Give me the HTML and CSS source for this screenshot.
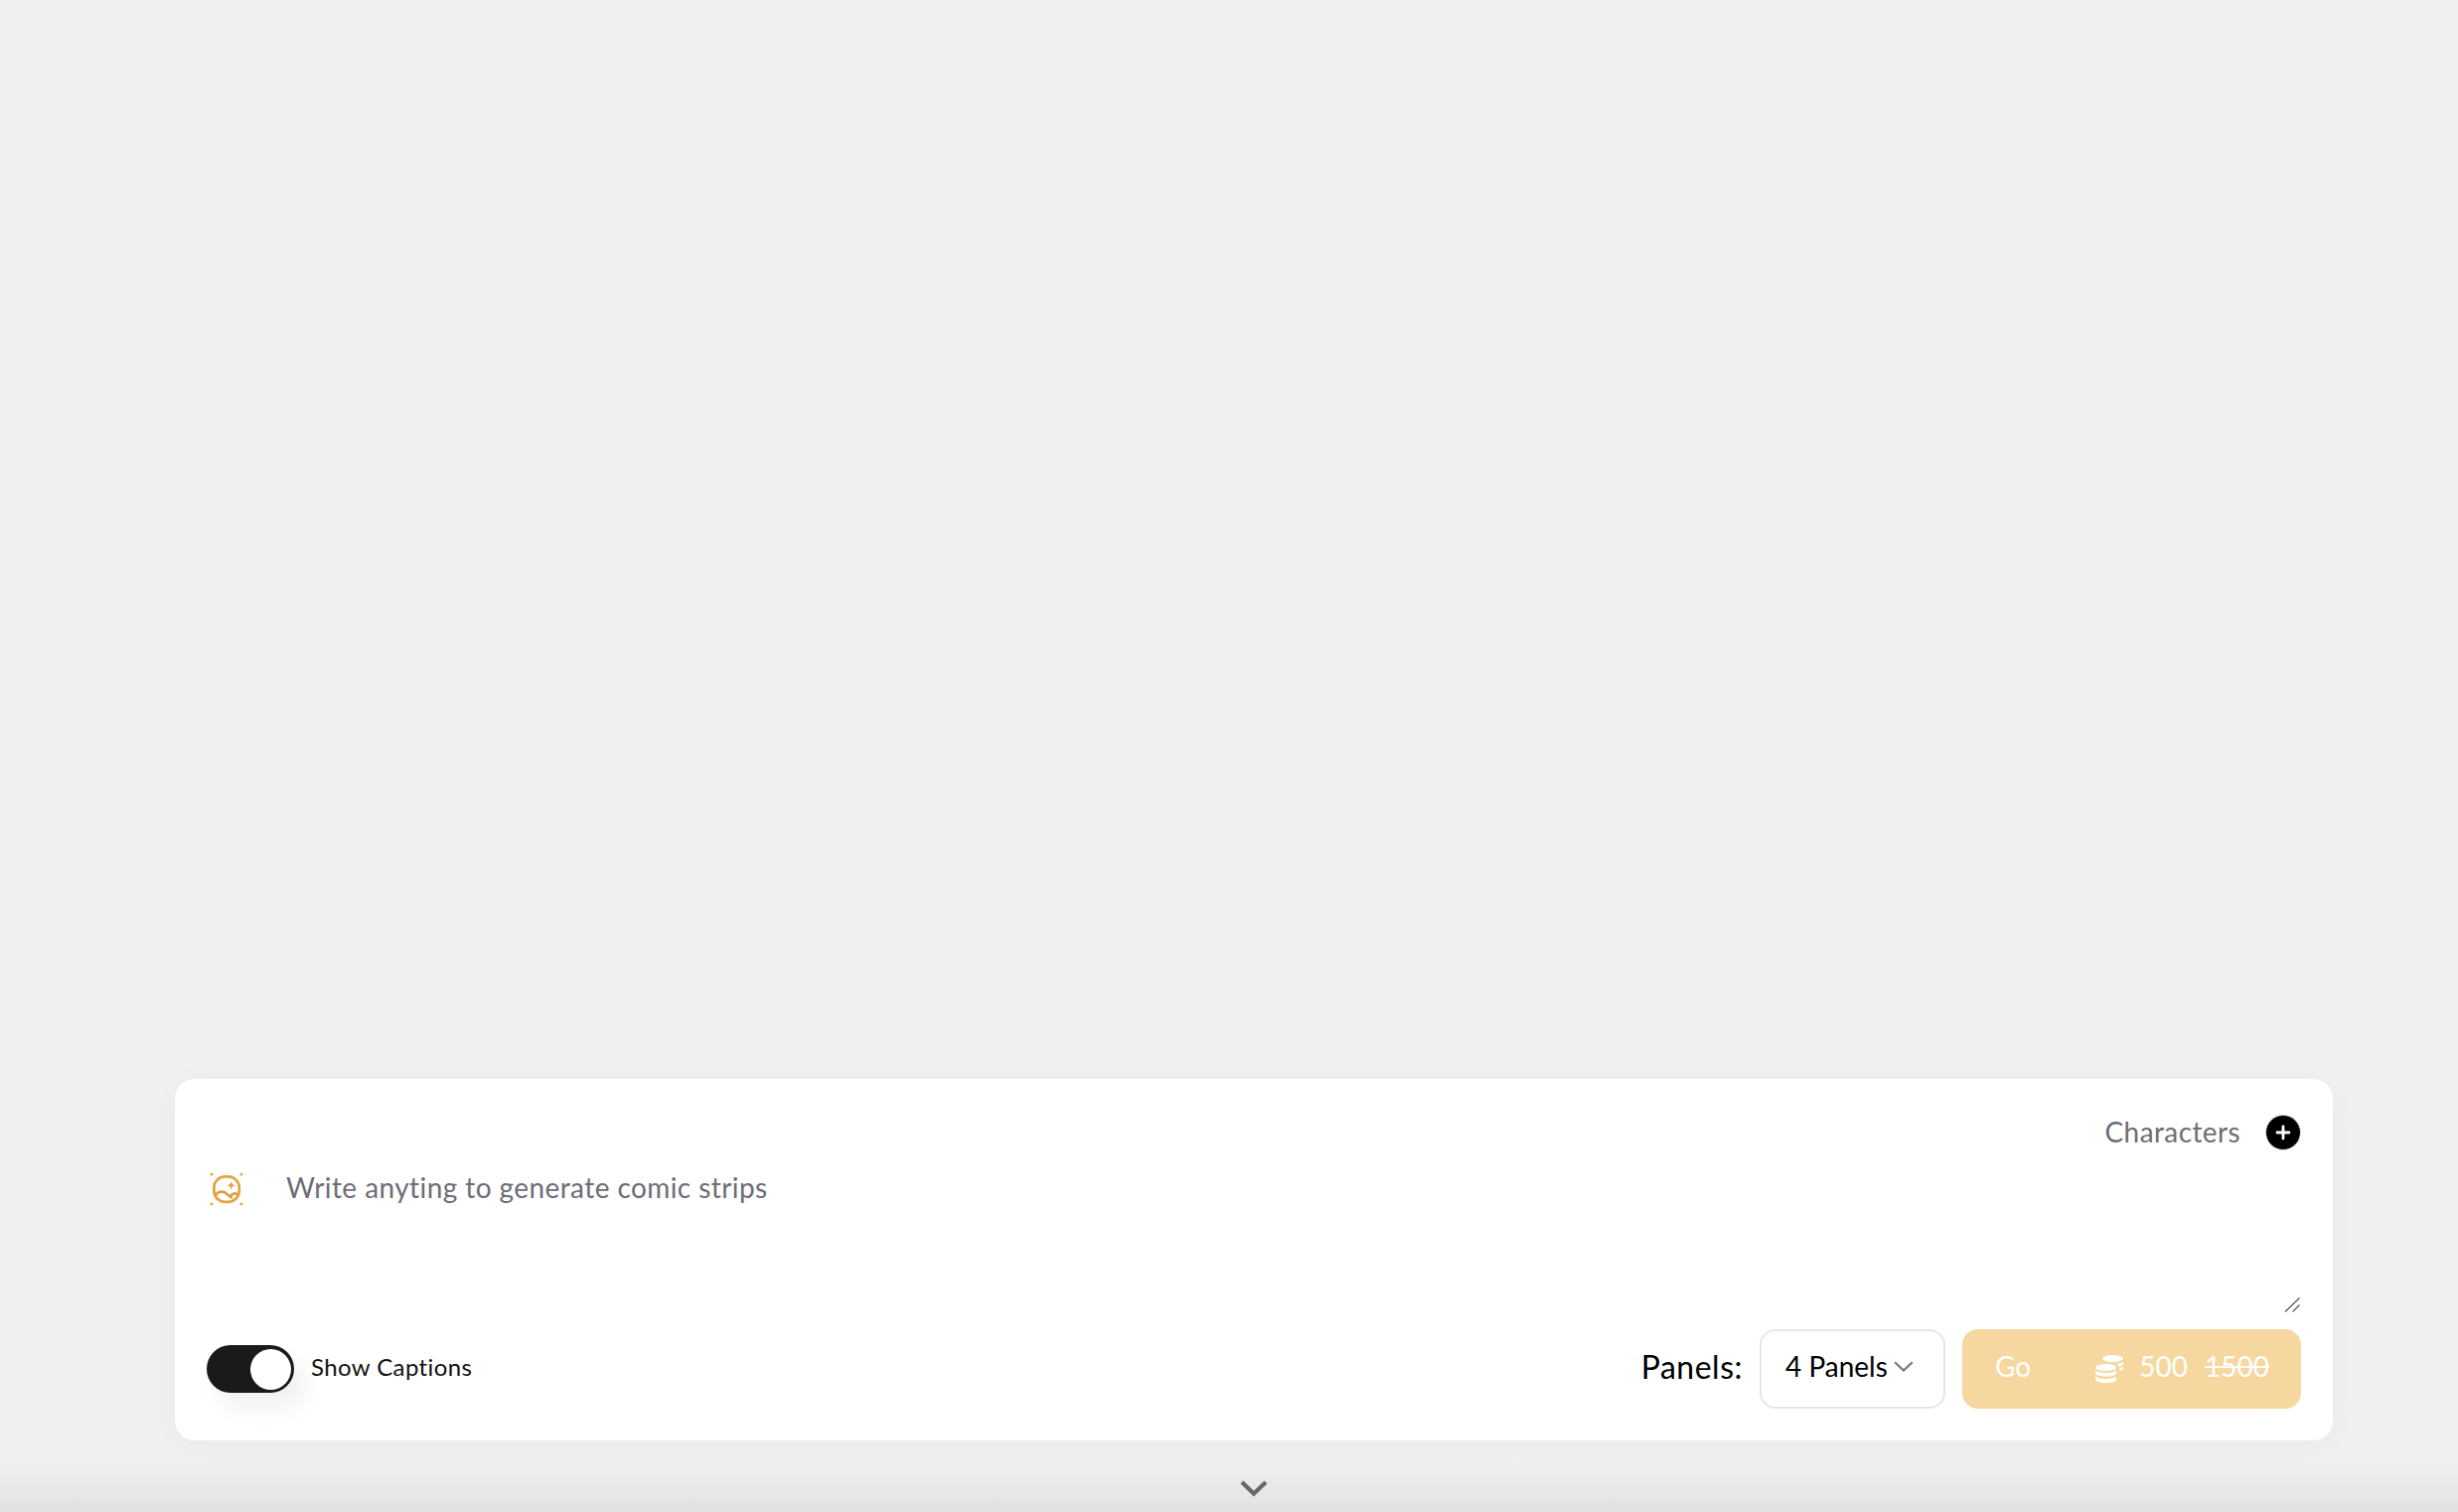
FILE: index.html
```html
<!DOCTYPE html>
<html lang="en">
<head>
<meta charset="utf-8">
<title>Comic strips</title>
<link rel="stylesheet" href="styles.css">
</head>
<body>
<main class="page">
  <section class="composer">
    <div class="composer-top">
      <span class="characters-label">Characters</span>
      <button class="add-btn" type="button" aria-label="Add character">
        <svg viewBox="0 0 34 34" width="34" height="34"><circle cx="17" cy="17" r="16" fill="#000"/><path d="M17 11v12M11 17h12" stroke="#fff" stroke-width="2.8" stroke-linecap="round"/></svg>
      </button>
    </div>
    <div class="prompt-row">
      <svg class="prompt-icon" viewBox="0 0 34 34" width="34" height="34">
        <g fill="#e3a545"><circle cx="2" cy="2" r="1.5"/><circle cx="32" cy="2" r="1.5"/><circle cx="2" cy="32" r="1.5"/><circle cx="32" cy="32" r="1.5"/></g>
        <rect x="4.4" y="4.4" width="25.4" height="25.4" rx="11" fill="none" stroke="#e3a545" stroke-width="2.800"/>
        <path d="M21.700 8.700c.5 3 1.500 4 4.400 4.600-2.900.6-3.900 1.600-4.400 4.600-.5-3-1.500-4-4.400-4.600 2.900-.6 3.900-1.600 4.400-4.600z" fill="#e3a545"/>
        <path d="M5 23.500c3-3.200 6-4.900 9.500-3.500 3.200 1.400 5 5 8.500 5.600M21 23.500c2-2.200 5-3 8-.6" fill="none" stroke="#dd9e3f" stroke-width="2.600"/>
      </svg>
      <div class="prompt-field">
        <textarea class="prompt-input" placeholder="Write anyting to generate comic strips"></textarea>
        <svg class="resize-grip" viewBox="0 0 16 15" width="16" height="15"><path d="M1 14.500 15.500 .5M8.500 14.500l7-7" fill="none" stroke="#555" stroke-width="1.200"/></svg>
      </div>
    </div>
    <div class="composer-bottom">
      <div class="caption-toggle">
        <span class="switch"><span class="knob"></span></span>
        <span class="caption-label">Show Captions</span>
      </div>
      <div class="actions">
        <span class="panels-label">Panels:</span>
        <div class="panels-select">
          <span>4 Panels</span>
          <svg viewBox="0 0 20 11" width="20" height="11"><path d="M1.200 1.200 10 9.500l8.800-8.300" fill="none" stroke="#77777b" stroke-width="2.200"/></svg>
        </div>
        <button class="go-btn" type="button">
          <span class="go-text">Go</span>
          <span class="price">
            <svg viewBox="0 0 28 28" width="28" height="28" fill="#fff">
              <ellipse cx="17.500" cy="3.500" rx="10.500" ry="3.500"/>
              <path d="M22 8.700c2.500-.3 4.800-1 6-2v2.500c0 1-1.500 2-4 2.600-.3-1.200-1-2.300-2-3.100zM24.500 13.300c1.500-.4 2.800-1 3.500-1.800v2.300c0 1-1.300 1.800-3.300 2.400z"/>
              <ellipse cx="10.500" cy="12.500" rx="10.500" ry="3.600"/>
              <path d="M0 15.500c2 1.700 5.800 2.500 10.500 2.500S19 17.200 21 15.500v2.800c0 2-4.700 3.400-10.500 3.400S0 20.300 0 18.300zM0 21.500c2 1.700 5.800 2.500 10.500 2.500S19 23.200 21 21.500v3c0 2-4.700 3.500-10.500 3.500S0 26.500 0 24.500z"/>
            </svg>
            <span class="price-now">500</span>
            <s class="price-old">1500</s>
          </span>
        </button>
      </div>
    </div>
  </section>
  <footer class="collapse-bar">
    <svg viewBox="0 0 30 18" width="30" height="18"><path d="M3 3l12 11.500L27 3" fill="none" stroke="#66666c" stroke-width="4.200"/></svg>
  </footer>
</main>
</body>
</html>
```
FILE: styles.css
```css
* { box-sizing: border-box; }
html, body { margin: 0; height: 100%; }
body {
  background: #f0f0f0;
  font-family: "Lato", "Liberation Sans", sans-serif;
  overflow: hidden;
}
.page {
  height: 100vh;
  display: flex;
  flex-direction: column;
  justify-content: flex-end;
}
.composer {
  width: 2172px;
  height: 364px;
  margin-left: 176px;
  padding: 32px;
  background: #fff;
  border-radius: 20px;
  box-shadow: 0 4px 30px rgba(0, 0, 0, 0.035);
  display: flex;
  flex-direction: column;
  position: relative;
  z-index: 1;
}
.composer-top {
  height: 44px;
  display: flex;
  justify-content: flex-end;
  align-items: center;
  gap: 25px;
}
.characters-label {
  font-size: 28px;
  letter-spacing: 0.4px;
  color: #6d6d75;
  padding-bottom: 2px;
}
.add-btn {
  width: 36px;
  height: 36px;
  padding: 0;
  border: 1px solid #e6e6e6;
  border-radius: 50%;
  background: #000;
  display: flex;
  align-items: center;
  justify-content: center;
  overflow: hidden;
}
.prompt-row {
  height: 160px;
  display: flex;
  align-items: flex-start;
}
.prompt-icon {
  margin: 18px 0 0 3px;
  flex: none;
}
.prompt-field {
  flex: 1;
  height: 160px;
  margin-left: 27px;
  position: relative;
}
.prompt-input {
  display: block;
  width: 100%;
  height: 100%;
  padding: 15px 16px 16px;
  border: 0;
  outline: 0;
  background: transparent;
  font: 28px/36px "Lato", "Liberation Sans", sans-serif;
  letter-spacing: 0.42px;
  color: #222;
  resize: none;
}
.prompt-input::placeholder { color: #6d6d75; opacity: 1; }
.resize-grip {
  position: absolute;
  right: 1px;
  bottom: 1px;
}
.composer-bottom {
  height: 80px;
  margin-top: 16px;
  display: flex;
  justify-content: space-between;
  align-items: center;
}
.caption-toggle {
  display: flex;
  align-items: center;
  gap: 17px;
}
.switch {
  width: 88px;
  height: 48px;
  border-radius: 24px;
  background: #1a1a1c;
  display: flex;
  justify-content: flex-end;
  align-items: center;
  padding-right: 3px;
  box-shadow: 12px 16px 24px rgba(0, 0, 0, 0.06);
}
.knob {
  width: 41px;
  height: 41px;
  border-radius: 50%;
  background: #fff;
}
.caption-label {
  font-size: 24px;
  letter-spacing: 0.4px;
  color: #111;
  padding-bottom: 5px;
}
.actions {
  display: flex;
  align-items: stretch;
  height: 80px;
}
.panels-label {
  align-self: center;
  margin-right: 17px;
  padding-bottom: 6px;
  font-size: 32px;
  letter-spacing: 0.5px;
  color: #000;
}
.panels-select {
  width: 187px;
  margin-right: 17px;
  padding: 0 0 6px 24px;
  border: 2px solid #e6e6e6;
  border-radius: 16px;
  display: flex;
  align-items: center;
  gap: 6px;
  font-size: 28px;
  color: #000;
}
.go-btn {
  width: 341px;
  padding: 0 32px 6px 33px;
  border: 0;
  border-radius: 16px;
  background: #f6d79f;
  color: #fff;
  font: 28px "Lato", "Liberation Sans", sans-serif;
  display: flex;
  align-items: center;
  justify-content: space-between;
}
.price {
  display: flex;
  align-items: center;
  gap: 17px;
}
.price svg { margin-top: 6px; margin-right: -1px; }
.price-old { color: #fff; }
.collapse-bar {
  height: 72px;
  flex: none;
  padding-top: 39px;
  padding-left: 1247px;
  background: linear-gradient(to bottom, #f0f0f0 25%, #e2e2e2 100%);
}
.collapse-bar svg { display: block; }
```
